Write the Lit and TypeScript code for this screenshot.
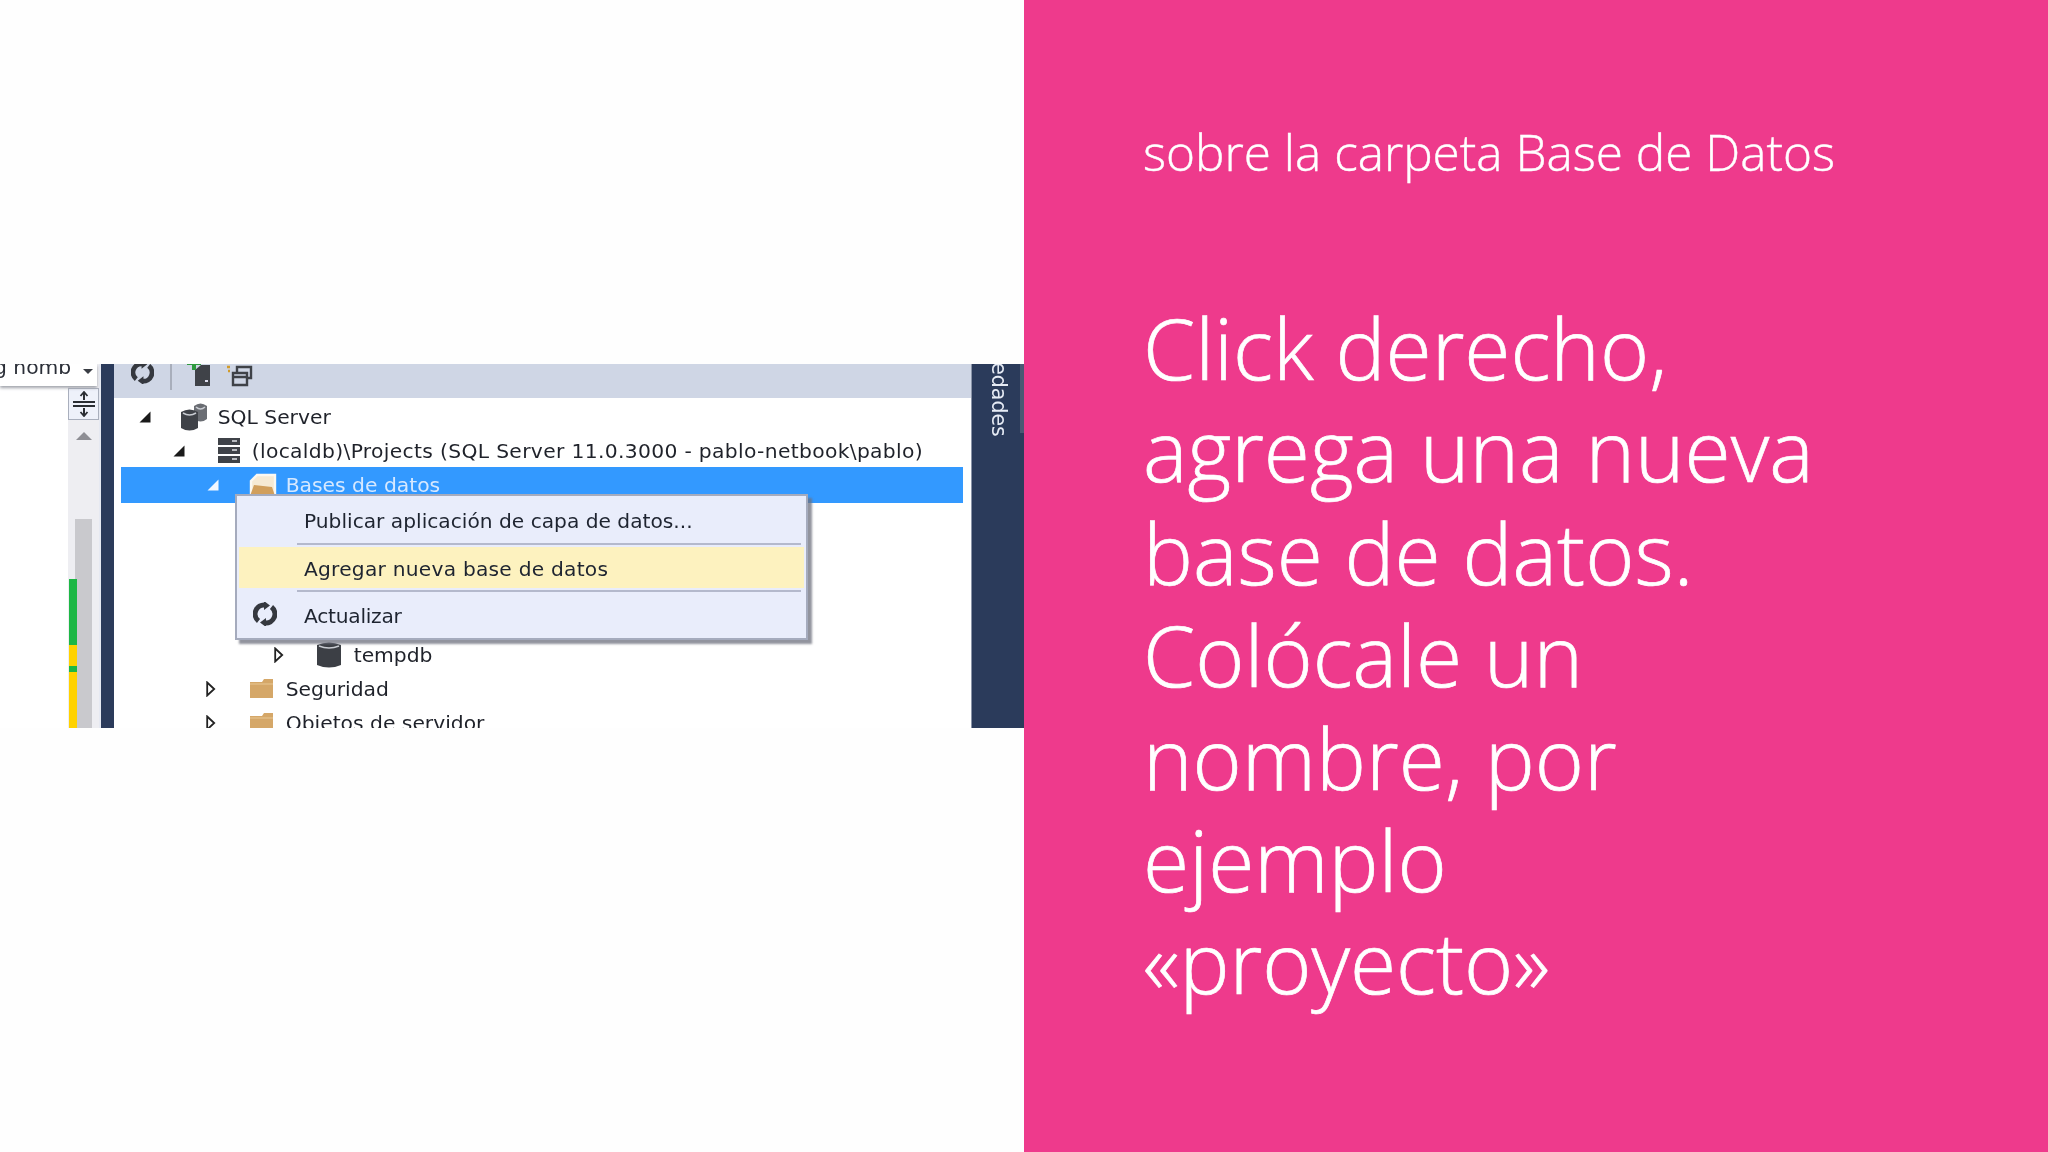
import { LitElement, html, css, svg } from "lit";
import { customElement } from "lit/decorators.js";

const refresh = (s: number) => html`<svg width=${s} height=${s} viewBox="0 0 24 24" fill="none" stroke="#35383f" stroke-width="5"><path d="M5.5 19 A9 9 0 0 1 12 3"/><path d="M18.5 5 A9 9 0 0 1 12 21"/><path d="M11 -1 L17 3.5 L11 8 Z M13 25 L7 20.5 L13 16 Z" fill="#35383f" stroke="none"/></svg>`;
const cyl = (x: number, y: number, w: number, h: number, f: string) => svg`<path d="M${x} ${y + 3} Q${x + w / 2} ${y - 2} ${x + w} ${y + 3} V${y + h - 3} Q${x + w / 2} ${y + h + 2} ${x} ${y + h - 3} Z" fill=${f}/><path d="M${x + 2} ${y + 4} Q${x + w / 2} ${y + 8} ${x + w - 2} ${y + 4}" stroke="#c9ccd2" stroke-width="1.6" fill="none"/>`;
const arrowDown = html`<svg width="14" height="14" viewBox="0 0 14 14"><path d="M12.5 1.5V12.5H1.5Z" fill="#1a1a1a"/></svg>`;
const arrowSel = html`<svg width="14" height="14" viewBox="0 0 14 14"><path d="M12.5 1.5V12.5H1.5Z" fill="#f2f7ff"/></svg>`;
const arrowRight = html`<svg width="10" height="16" viewBox="0 0 10 16"><path d="M1.2 1.5 L8.2 8 L1.2 14.5Z" fill="#fff" stroke="#222" stroke-width="1.8"/></svg>`;
const folder = (open = false) => open
  ? html`<svg width="30" height="26" viewBox="0 0 30 26"><path d="M3 24 V9 L9 3 H27 V24Z" fill="#f6ead4" stroke="#fbf8f1" stroke-width="2.4"/><path d="M2 24 L6 13 L24 15 L27 24Z" fill="#d19f5c"/></svg>`
  : html`<svg width="28" height="24" viewBox="0 0 28 24"><path d="M2 5 L14 5 L16 2 H25 V21 H2Z" fill="#d5a768"/><path d="M2 7 H25" stroke="#e9c894" stroke-width="1"/></svg>`;
const sqlIcon = html`<svg class="sq" width="32" height="30" viewBox="0 0 30 30">${cyl(15, 1, 13, 19, "#6a6d73")}${cyl(2, 7, 17, 22, "#3f4248")}</svg>`;
const serverIcon = html`<svg class="sv" width="24" height="28" viewBox="0 0 24 28"><path d="M1 1H23V8H1ZM1 10H23V17H1ZM1 19H23V26H1Z" fill="#3f4248"/><path d="M15 4H20M15 13H20M15 22H20" stroke="#dfe1e5" stroke-width="1.6"/></svg>`;
const dbIcon = html`<svg width="26" height="28" viewBox="0 0 26 28">${cyl(1, 1, 24, 26, "#3c3f45")}</svg>`;

interface Row { label: string; indent: number; arrow: "down" | "right" | "sel"; icon: unknown; sel?: boolean; gap?: number; wide?: boolean }
const rows: Row[] = [
  { label: "SQL Server", indent: 24, arrow: "down", icon: sqlIcon },
  { label: "(localdb)\\Projects (SQL Server 11.0.3000 - pablo-netbook\\pablo)", indent: 58, arrow: "down", icon: serverIcon, wide: true },
  { label: "Bases de datos", indent: 92, arrow: "sel", icon: folder(true), sel: true },
  { label: "tempdb", indent: 160, arrow: "right", icon: dbIcon, gap: 136 },
  { label: "Seguridad", indent: 92, arrow: "right", icon: folder() },
  { label: "Objetos de servidor", indent: 92, arrow: "right", icon: folder() },
];

@customElement("app-root")
export class AppRoot extends LitElement {
  static styles = css`
    :host { display: block; width: 2048px; height: 1152px; overflow: hidden; background: #fff; }
    .page { display: grid; grid-template-columns: 1024px 1024px; height: 1152px; }
    .left { padding-top: 364px; background: #fefefe; }
    .shot { position: relative; display: flex; height: 364px; width: 1024px; overflow: hidden; background: #fff; font-family: "DejaVu Sans", sans-serif; filter: blur(0.45px); }
    .blank { width: 68px; flex: none; }
    .scroll { width: 31px; flex: none; background: #eeeef2; display: flex; flex-direction: column; align-items: center; padding-top: 24px; box-sizing: border-box; position: relative; }
    .split { width: 31px; height: 32px; box-sizing: border-box; border: 1px solid #a9afbd; background: #eef1fa; display: flex; align-items: center; justify-content: center; }
    .up { margin-top: 12px; width: 0; height: 0; border-left: 8px solid transparent; border-right: 8px solid transparent; border-bottom: 8px solid #8e8e94; }
    .track { margin-top: 79px; flex: 1; width: 17px; background: #c9c9cd; }
    .marks { position: absolute; left: 1px; top: 215px; bottom: 0; width: 8px; display: flex; flex-direction: column; }
    .mk { flex: none; }
    .edge { width: 2px; flex: none; background: #e6e9f2; }
    .navy { width: 13px; flex: none; background: #2b3b5b; }
    .main { width: 857px; flex: none; display: flex; flex-direction: column; position: relative; background: #fff; }
    .toolbar { height: 34px; flex: none; background: #cfd6e5; display: flex; align-items: flex-start; position: relative; overflow: hidden; padding-left: 17px; box-sizing: border-box; }
    .tb-r { margin-top: -3px; }
    .tb-sep { width: 2px; height: 26px; background: #a8aebb; margin-left: 16px; }
    .tb-srv { margin-left: 15px; margin-top: -2px; }
    .tb-win { margin-left: 16px; margin-top: 0; }
    .tree { flex: 1; padding-top: 2px; position: relative; }
    .row { display: flex; align-items: center; height: 34px; font-size: 20.3px; color: #1f222a; white-space: nowrap; position: relative; }
    .row.sel { background: #3399ff; color: #d6e8ff; margin-left: 7px; margin-right: 8px; height: 36px; margin-top: -1px; margin-bottom: -1px; }
    .row.wide { letter-spacing: 0.33px; }
    .arr { width: 34px; flex: none; display: flex; align-items: center; }
    .ico { width: 37.7px; padding-left: 8px; flex: none; display: flex; align-items: center; }
    .sv { margin-left: 3px; }
    .sq { margin-left: -2px; }
    .menu { position: absolute; left: 121px; top: 96px; width: 573px; height: 146px; box-sizing: border-box; border: 2px solid #a5abbd; background: #e9edfb; box-shadow: 4px 4px 2px rgba(110,112,125,.75); padding-top: 3px; color: #1e2430; font-size: 20.2px; display: flex; flex-direction: column; }
    .item { display: flex; align-items: center; height: 42px; flex: none; padding-left: 65px; margin: 0 2px; position: relative; white-space: nowrap; box-sizing: border-box; padding-top: 2px; }
    .item.hi { background: #fdf2bf; height: 41px; letter-spacing: 0.24px; }
    .item.tight { letter-spacing: -0.25px; }
    .item .mi { position: absolute; left: 14px; top: 8px; display: flex; }
    .sep { height: 2px; margin: 2px 5px 2px 60px; background: #b4b9cc; flex: none; }
    .side { position: relative; flex: 1; background: #2b3b5b; border-left: 1px solid #8a94a8; overflow: hidden; color: #e6ebf5; font-size: 20.5px; }
    .side .t { position: absolute; left: 15px; top: -53px; writing-mode: vertical-rl; white-space: nowrap; }
    .side .bar { position: absolute; right: 0; top: 0; width: 4px; height: 69px; background: #4a5873; }
    .dd { position: absolute; left: 0; top: 0; width: 97px; height: 22px; background: #fff; box-shadow: 0 2px 3px #a0a3ab; overflow: hidden; font-size: 20.3px; color: #2b2f38; }
    .dd .tx { position: absolute; left: -6px; top: -9px; white-space: nowrap; }
    .dd .car { position: absolute; left: 83px; top: 5px; width: 0; height: 0; border-left: 5px solid transparent; border-right: 5px solid transparent; border-top: 5px solid #3a3d44; }
    .right { background: #ee3a8c; color: #fff; font-family: "Open Sans", sans-serif; font-weight: 300; padding: 119px 0 0 119px; box-sizing: border-box; overflow: hidden; }
    .sub { margin: 0; font-size: 49.5px; line-height: 66px; white-space: nowrap; -webkit-text-stroke: 0.4px #fff; }
    .big { margin: 112px 0 0; width: 700px; font-size: 84px; line-height: 102.4px; -webkit-text-stroke: 0.7px #fff; }
  `;
  render() {
    return html`<div class="page">
      <div class="left"><div class="shot">
        <div class="blank"></div>
        <div class="scroll">
          <div class="split"><svg width="24" height="26" viewBox="0 0 24 26" fill="none" stroke="#2a2d33" stroke-width="2"><path d="M1 11H23M1 15H23M12 1V9M12 17V25"/><path d="M8.5 5 L12 1 L15.5 5M8.5 21L12 25L15.5 21" stroke-width="1.8"/></svg></div>
          <div class="up"></div>
          <div class="track"></div>
          <div class="marks">
            <div class="mk" style="height:66px;background:#1db745"></div>
            <div class="mk" style="height:21px;background:#ffd200"></div>
            <div class="mk" style="height:6px;background:#1db745"></div>
            <div class="mk" style="flex:1;background:#ffd200"></div>
          </div>
        </div>
        <div class="edge"></div>
        <div class="navy"></div>
        <div class="main">
          <div class="toolbar">
            <div class="tb-r">${refresh(23)}</div>
            <div class="tb-sep"></div>
            <div class="tb-srv"><svg width="24" height="24" viewBox="0 0 24 24"><path d="M8 8 L14 3H23V24H8Z" fill="#3f4248"/><path d="M18 18h3v2h-3z" fill="#dde"/><path d="M0 0H14V3H9V8H5V3H0Z" fill="#2f9a3f"/></svg></div>
            <div class="tb-win"><svg width="26" height="24" viewBox="0 0 26 24" fill="none" stroke="#3f4248" stroke-width="2.4"><path d="M10 8V3H24V14H20"/><path d="M6 9H20V21H6ZM6 13H20"/><path d="M0 3H3M1 7H3" stroke="#d29b2a"/></svg></div>
          </div>
          <div class="tree">
            ${rows.map((r) => html`${r.gap ? html`<div style="height:${r.gap}px"></div>` : ""}
              <div class="row ${r.sel ? "sel" : ""} ${r.wide ? "wide" : ""}" style="padding-left:${r.sel ? r.indent - 7 : r.indent}px">
                <span class="arr">${r.arrow === "down" ? arrowDown : r.arrow === "sel" ? arrowSel : arrowRight}</span>
                <span class="ico">${r.icon}</span>
                <span>${r.label}</span>
              </div>`)}
            <div class="menu">
              <div class="item">Publicar aplicación de capa de datos...</div>
              <div class="sep"></div>
              <div class="item hi">Agregar nueva base de datos</div>
              <div class="sep"></div>
              <div class="item tight"><span class="mi">${refresh(24)}</span>Actualizar</div>
            </div>
          </div>
        </div>
        <div class="side"><span class="t">Propiedades</span><span class="bar"></span></div>
        <div class="dd"><span class="tx">g nomb</span><span class="car"></span></div>
      </div></div>
      <div class="right">
        <p class="sub">sobre la carpeta Base de Datos</p>
        <p class="big">Click derecho, agrega una nueva base de datos. Colócale un nombre, por ejemplo «proyecto»</p>
      </div>
    </div>`;
  }
}
